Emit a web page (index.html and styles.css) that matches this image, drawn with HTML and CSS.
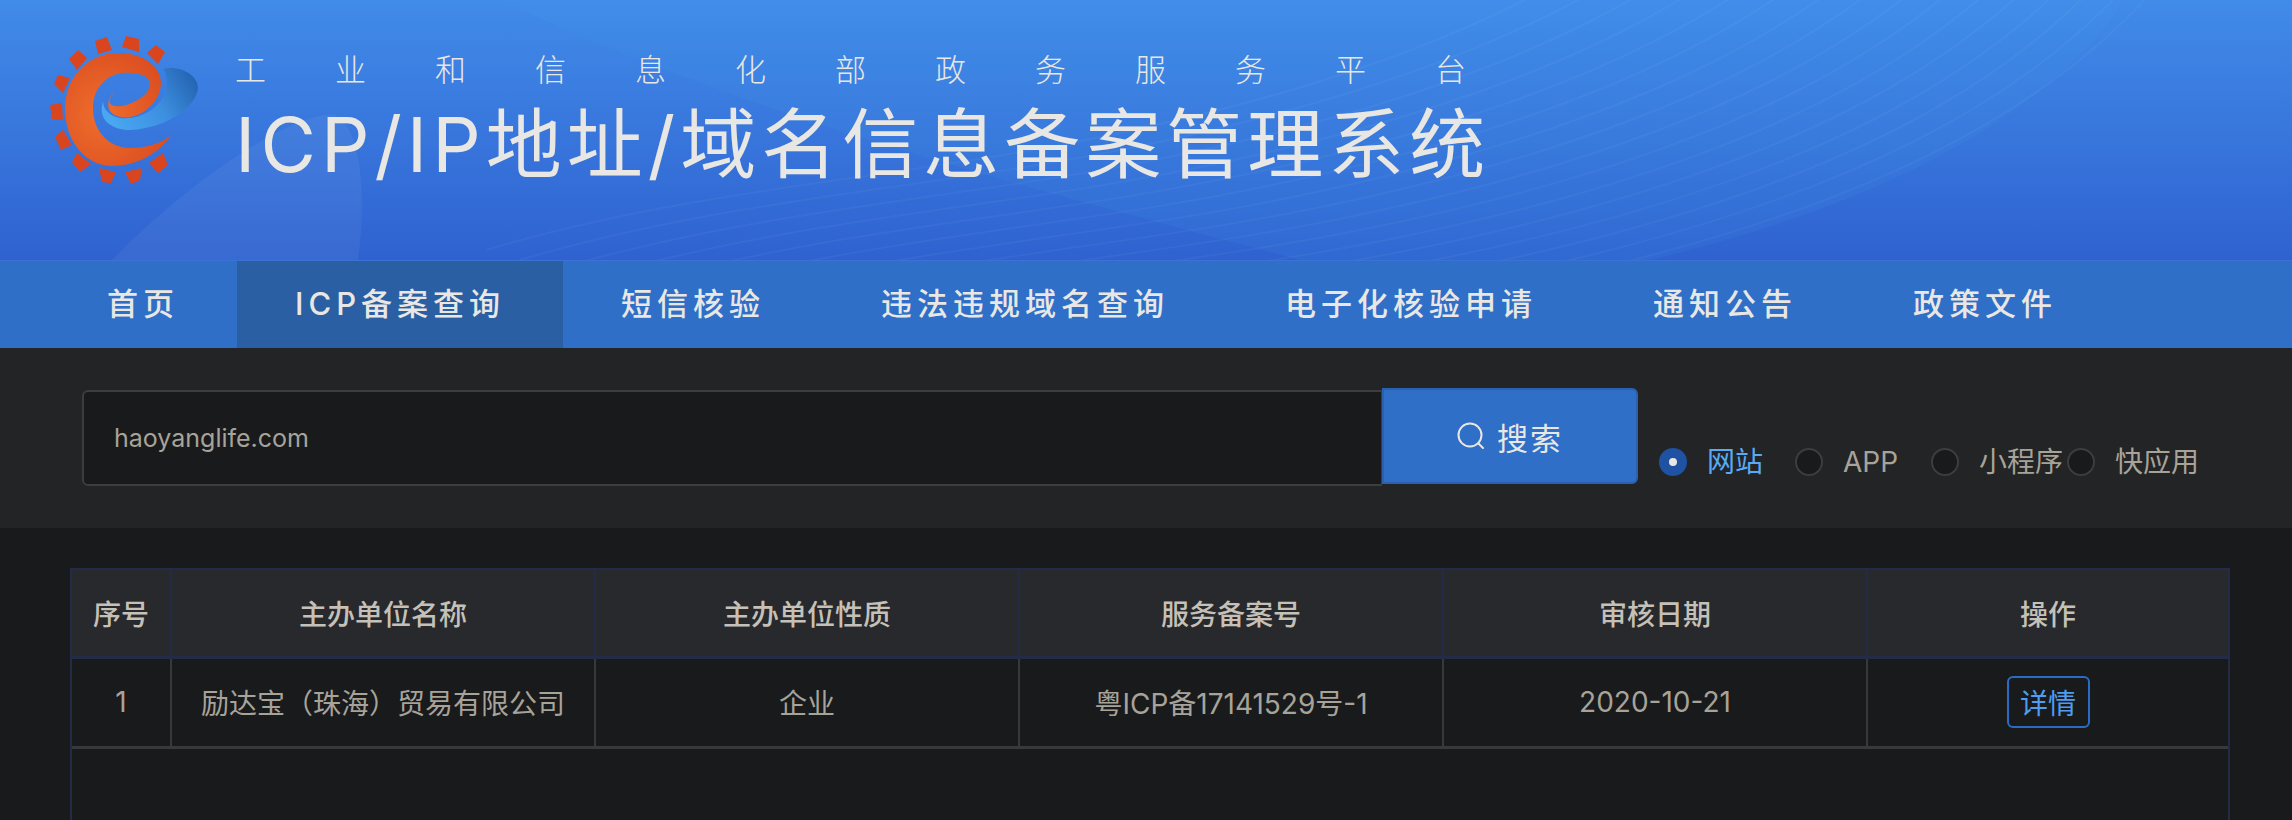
FILE: index.html
```html
<!DOCTYPE html>
<html lang="en">
<head>
    <meta charset="UTF-8">
    <meta name="viewport" content="width=device-width, initial-scale=1.0">
    <title>ICP/IP地址/域名信息备案管理系统</title>
    <link rel="stylesheet" href="styles.css">
</head>
<body>
    <header class="banner">
        <svg class="banner-art" viewBox="0 0 2292 260" aria-hidden="true">
            <defs>
                <path id="waveLine" d="M2200 -70 C2080 110 1850 220 1500 290 C1300 330 1100 340 900 400" />
            </defs>
            <path class="banner-hill" d="M112 260 C200 170 300 110 335 115 C365 130 365 210 358 260 Z" />
            <path class="banner-sweep" d="M500 0 C760 120 1000 180 1300 260 L1650 260 C1900 200 2050 110 2125 0 Z" />
            <g class="banner-lines">
                <use href="#waveLine" />
                <use href="#waveLine" x="-22" y="-10" />
                <use href="#waveLine" x="-44" y="-20" />
                <use href="#waveLine" x="-66" y="-30" />
                <use href="#waveLine" x="-90" y="-40" />
                <use href="#waveLine" x="-114" y="-50" />
                <use href="#waveLine" x="-140" y="-60" />
                <use href="#waveLine" x="-166" y="-70" />
                <use href="#waveLine" x="-194" y="-80" />
                <use href="#waveLine" x="-222" y="-90" />
                <use href="#waveLine" x="-252" y="-100" />
                <use href="#waveLine" x="-282" y="-110" />
                <use href="#waveLine" x="-314" y="-120" />
                <use href="#waveLine" x="-346" y="-130" />
                <use href="#waveLine" x="-380" y="-140" />
                <use href="#waveLine" x="-414" y="-150" />
            </g>
        </svg>
        <svg class="logo" viewBox="0 0 180 180" aria-hidden="true">
            <defs>
                <linearGradient id="swoosh" x1="0" y1="0.7" x2="1" y2="0.3">
                    <stop offset="0" stop-color="#4aa8f2" />
                    <stop offset="0.55" stop-color="#3d8fe0" />
                    <stop offset="1" stop-color="#2566b4" />
                </linearGradient>
                <radialGradient id="spiral" cx="0.35" cy="0.55" r="0.75">
                    <stop offset="0" stop-color="#ee6e2c" />
                    <stop offset="1" stop-color="#d9491f" />
                </radialGradient>
            </defs>
            <g class="logo-teeth">
                <polygon points="65,21 77,17 82,30 68,34" />
                <polygon points="96,16 109,19 109,32 92,27" />
                <polygon points="126,25 135,32 128,44 117,33" />
                <polygon points="48,30 57,38 47,50 39,39" />
                <polygon points="28,55 40,58 33,73 24,64" />
                <polygon points="20,85 32,83 33,100 22,99" />
                <polygon points="33,110 42,125 31,130 25,117" />
                <polygon points="47,133 61,144 50,152 42,142" />
                <polygon points="69,148 86,152 81,163 72,162" />
                <polygon points="95,152 112,148 110,160 101,164" />
                <polygon points="133,133 138,145 128,153 119,143" />
            </g>
            <path fill="url(#swoosh)" d="M133 49 C150 45 168 55 168 68 C167 85 140 108 100 110 C82 110 67 100 73 81 C73 92 85 100 98 98 C120 97 136 80 137 65 C137 58 136 52 133 49 Z" />
            <path fill="url(#spiral)" d="M142 114 C128 135 105 146 82 146 C55 146 35 120 35 89 C35 57 58 33 88 33 C113 33 131 46 131 63 C131 82 110 100 92 97 C78 96 72 82 87 69 C80 76 77 83 82 85 C92 90 119 78 120 65 C121 56 108 52 92 53 C75 55 63 70 63 88 C63 112 80 128 100 128 C115 128 132 124 142 114 Z" />
        </svg>
        <div class="banner-text">
            <p class="banner-sub">工业和信息化部政务服务平台</p>
            <h1 class="banner-title">ICP/IP地址/域名信息备案管理系统</h1>
        </div>
    </header>

    <nav class="nav">
        <a class="nav-item">首页</a>
        <a class="nav-item active">ICP备案查询</a>
        <a class="nav-item">短信核验</a>
        <a class="nav-item">违法违规域名查询</a>
        <a class="nav-item">电子化核验申请</a>
        <a class="nav-item">通知公告</a>
        <a class="nav-item">政策文件</a>
    </nav>

    <section class="search">
        <div class="search-box">haoyanglife.com</div>
        <button class="search-btn">
            <svg class="search-icon" viewBox="0 0 28 28" aria-hidden="true">
                <circle cx="13" cy="13" r="11.5" />
                <path d="M21.5 21.5 L26 26" />
            </svg>
            搜索
        </button>
        <div class="radios">
            <label class="radio checked"><span class="radio-dot"></span>网站</label>
            <label class="radio"><span class="radio-dot"></span>APP</label>
            <label class="radio"><span class="radio-dot"></span>小程序</label>
            <label class="radio"><span class="radio-dot"></span>快应用</label>
        </div>
    </section>

    <main class="results">
        <table class="results-table">
            <thead>
                <tr>
                    <th class="col-no">序号</th>
                    <th class="col-wide">主办单位名称</th>
                    <th class="col-wide">主办单位性质</th>
                    <th class="col-wide">服务备案号</th>
                    <th class="col-wide">审核日期</th>
                    <th>操作</th>
                </tr>
            </thead>
            <tbody>
                <tr>
                    <td>1</td>
                    <td>励达宝（珠海）贸易有限公司</td>
                    <td>企业</td>
                    <td>粤ICP备17141529号-1</td>
                    <td>2020-10-21</td>
                    <td><button class="detail-btn">详情</button></td>
                </tr>
            </tbody>
        </table>
    </main>
</body>
</html>
```

FILE: styles.css
```css
html, body {
    height: 100%;
}
body {
    margin: 0;
    height: 820px;
    overflow: hidden;
    display: flex;
    flex-direction: column;
    background: #191a1c;
    font-family: Inter, "Noto Sans CJK SC", sans-serif;
    color: #a8a399;
}

/* banner */
.banner {
    position: relative;
    height: 260px;
    flex: none;
    display: flex;
    align-items: flex-start;
    padding-left: 30px;
    box-sizing: border-box;
    background: linear-gradient(#418be9, #2f62d0);
    overflow: hidden;
}
.banner-art {
    position: absolute;
    left: 0;
    top: 0;
    width: 2292px;
    height: 260px;
}
.banner-hill {
    fill: rgba(255, 255, 255, 0.05);
}
.banner-sweep {
    fill: rgba(70, 170, 240, 0.1);
}
.banner-lines {
    fill: none;
    stroke: rgba(255, 255, 255, 0.04);
    stroke-width: 2;
}
.logo {
    position: relative;
    width: 180px;
    height: 180px;
    margin-top: 20px;
    flex: none;
}
.logo-teeth {
    fill: #d9451f;
}
.banner-text {
    position: relative;
    margin-left: 25px;
    color: #e9e7e3;
}
.banner-sub {
    margin: 50px 0 0;
    font-size: 31px;
    line-height: 40px;
    font-weight: 300;
    letter-spacing: 69px;
    white-space: nowrap;
}
.banner-title {
    margin: 11px 0 0;
    font-size: 76px;
    line-height: 86px;
    font-weight: 400;
    letter-spacing: 5px;
    white-space: nowrap;
}

/* nav */
.nav {
    height: 88px;
    flex: none;
    display: flex;
    padding-left: 49px;
    box-sizing: border-box;
    background: #2f6fc7;
    border-top: 1px solid #3a72d6;
}
.nav-item {
    display: flex;
    align-items: center;
    padding: 0 58px 6px 58px;
    font-size: 31px;
    font-weight: 500;
    letter-spacing: 5px;
    color: #e9e7e3;
    white-space: nowrap;
}
.nav-item.active {
    background: #2a5fa3;
}

/* search */
.search {
    height: 180px;
    flex: none;
    display: flex;
    align-items: flex-start;
    padding: 40px 0 0 82px;
    box-sizing: border-box;
    background: #222426;
}
.search-box {
    width: 1300px;
    height: 96px;
    margin-top: 2px;
    flex: none;
    display: flex;
    align-items: center;
    padding-left: 30px;
    box-sizing: border-box;
    background: #191a1c;
    border: 2px solid #3b3d40;
    border-right-width: 1px;
    border-radius: 6px 0 0 6px;
    font-size: 25px;
}
.search-btn {
    width: 256px;
    height: 96px;
    flex: none;
    display: flex;
    align-items: center;
    justify-content: center;
    gap: 12px;
    padding: 0;
    background: #2f6fc7;
    border: 2px solid #2a60ad;
    border-radius: 0 6px 6px 0;
    font-family: inherit;
    font-size: 31px;
    letter-spacing: 2px;
    color: #e9e7e3;
}
.search-icon {
    width: 28px;
    height: 28px;
    fill: none;
    stroke: #e9e7e3;
    stroke-width: 2;
    stroke-linecap: round;
}

/* radios */
.radios {
    display: flex;
    margin: 60px 0 0 21px;
}
.radio {
    width: 136px;
    display: flex;
    align-items: center;
    gap: 20px;
    font-size: 28px;
    line-height: 28px;
    white-space: nowrap;
}
.radio-dot {
    width: 28px;
    height: 28px;
    flex: none;
    box-sizing: border-box;
    background: #191a1c;
    border: 2px solid #3b3d40;
    border-radius: 50%;
}
.radio.checked {
    color: #5aa9f5;
}
.radio.checked .radio-dot {
    border: 10px solid #1f52a3;
    background: #e9e7e3;
}

/* table */
.results {
    flex: 1;
    margin: 40px 62px 0 70px;
    border: 2px solid #232b47;
    border-bottom: none;
}
.results-table {
    width: 100%;
    table-layout: fixed;
    border-collapse: collapse;
    font-size: 28px;
    text-align: center;
}
.results-table th {
    height: 87px;
    padding: 0;
    box-sizing: border-box;
    background: #28292c;
    border-right: 2px solid #232b47;
    border-bottom: 3px solid #232b47;
    font-weight: 500;
    color: #c5c1b8;
}
.results-table td {
    height: 90px;
    padding: 0;
    box-sizing: border-box;
    border-right: 2px solid #38393c;
    border-bottom: 3px solid #38393c;
}
.results-table th:last-child,
.results-table td:last-child {
    border-right: none;
}
.col-no {
    width: 99px;
}
.col-wide {
    width: 424px;
}
.detail-btn {
    width: 83px;
    height: 52px;
    padding: 0;
    background: transparent;
    border: 2px solid #2a6cc4;
    border-radius: 6px;
    font-family: inherit;
    font-size: 28px;
    color: #4f9df0;
}
```
